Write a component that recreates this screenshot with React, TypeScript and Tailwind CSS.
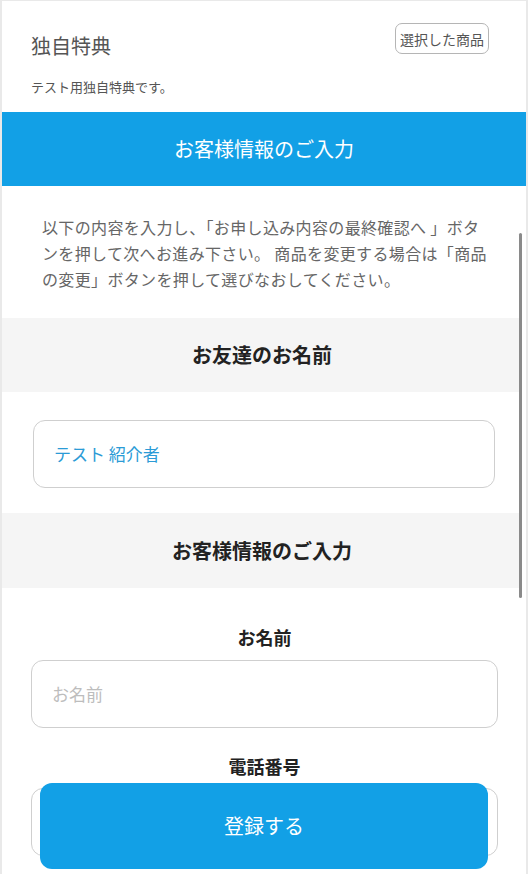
import React from "react";

const font = { fontFamily: '"Noto Sans CJK JP", "Noto Sans", sans-serif' };

export default function App() {
  return (
    <div className="h-[874px] w-[528px] bg-[#e9e9e9] pt-[1px] pl-[2px] pr-[2px] relative overflow-hidden" style={font}>
      <div className="bg-white h-[873px]">
        {/* header */}
        <div className="pt-[22px] pl-[29px] pr-[37px] pb-[15px]">
          <div className="flex justify-between items-start">
            <div className="mt-[9px] text-[20px] leading-[28px] text-[#555555]">独自特典</div>
            <button className="h-[31px] px-[4px] border border-[#b5b5b5] rounded-[7px] text-[14px] leading-[20px] text-[#555555] bg-white">
              選択した商品
            </button>
          </div>
          <div className="mt-[17px] text-[13px] leading-[20px] text-[#555555]">テスト用独自特典です。</div>
        </div>

        {/* blue band */}
        <div className="h-[74px] bg-[#12a0e6] flex items-center justify-center text-white text-[20px]">
          お客様情報のご入力
        </div>

        {/* paragraph */}
        <div className="pt-[28px] pb-[26px] pl-[40px] text-[16px] leading-[26px] tracking-[0.35px] text-[#666666]">
          以下の内容を入力し、「お申し込み内容の最終確認へ 」ボタ
          <br />
          ンを押して次へお進み下さい。 商品を変更する場合は「商品
          <br />
          の変更」ボタンを押して選びなおしてください。
        </div>

        {/* friend name section */}
        <div className="mr-[4px] h-[74px] bg-[#f5f5f5] flex items-center justify-center text-[20px] font-bold text-[#222222]">
          お友達のお名前
        </div>
        <div className="pt-[28px] pb-[25px] pl-[31px] pr-[31px]">
          <div className="h-[68px] border border-[#cfcfcf] rounded-[12px] flex items-center pl-[20px] text-[17px] text-[#2b9bd6]">
            テスト 紹介者
          </div>
        </div>

        {/* customer info section */}
        <div className="mr-[4px] h-[75px] bg-[#f5f5f5] flex items-center justify-center text-[20px] font-bold text-[#222222]">
          お客様情報のご入力
        </div>

        <div className="pt-[36px] pl-[29px] pr-[28px]">
          <div className="text-center text-[18px] leading-[27px] font-bold text-[#222222]">お名前</div>
          <div className="mt-[9px] h-[68px] border border-[#cfcfcf] rounded-[12px] flex items-center pl-[20px] text-[17px] text-[#bdbdbd]">
            お名前
          </div>
          <div className="mt-[25px] text-center text-[18px] leading-[27px] font-bold text-[#222222]">電話番号</div>
          <div className="mt-[8px] h-[68px] border border-[#cfcfcf] rounded-[12px]" />
        </div>
      </div>

      {/* scrollbar overlay */}
      <div className="absolute left-[519px] top-[233px] w-[3px] h-[365px] rounded-full bg-[#8a8a8a]" />

      {/* fixed register button */}
      <button className="fixed left-[40px] bottom-[5px] w-[448px] h-[86px] rounded-[12px] bg-[#12a0e6] text-white text-[20px] flex items-center justify-center" style={font}>
        登録する
      </button>
    </div>
  );
}
